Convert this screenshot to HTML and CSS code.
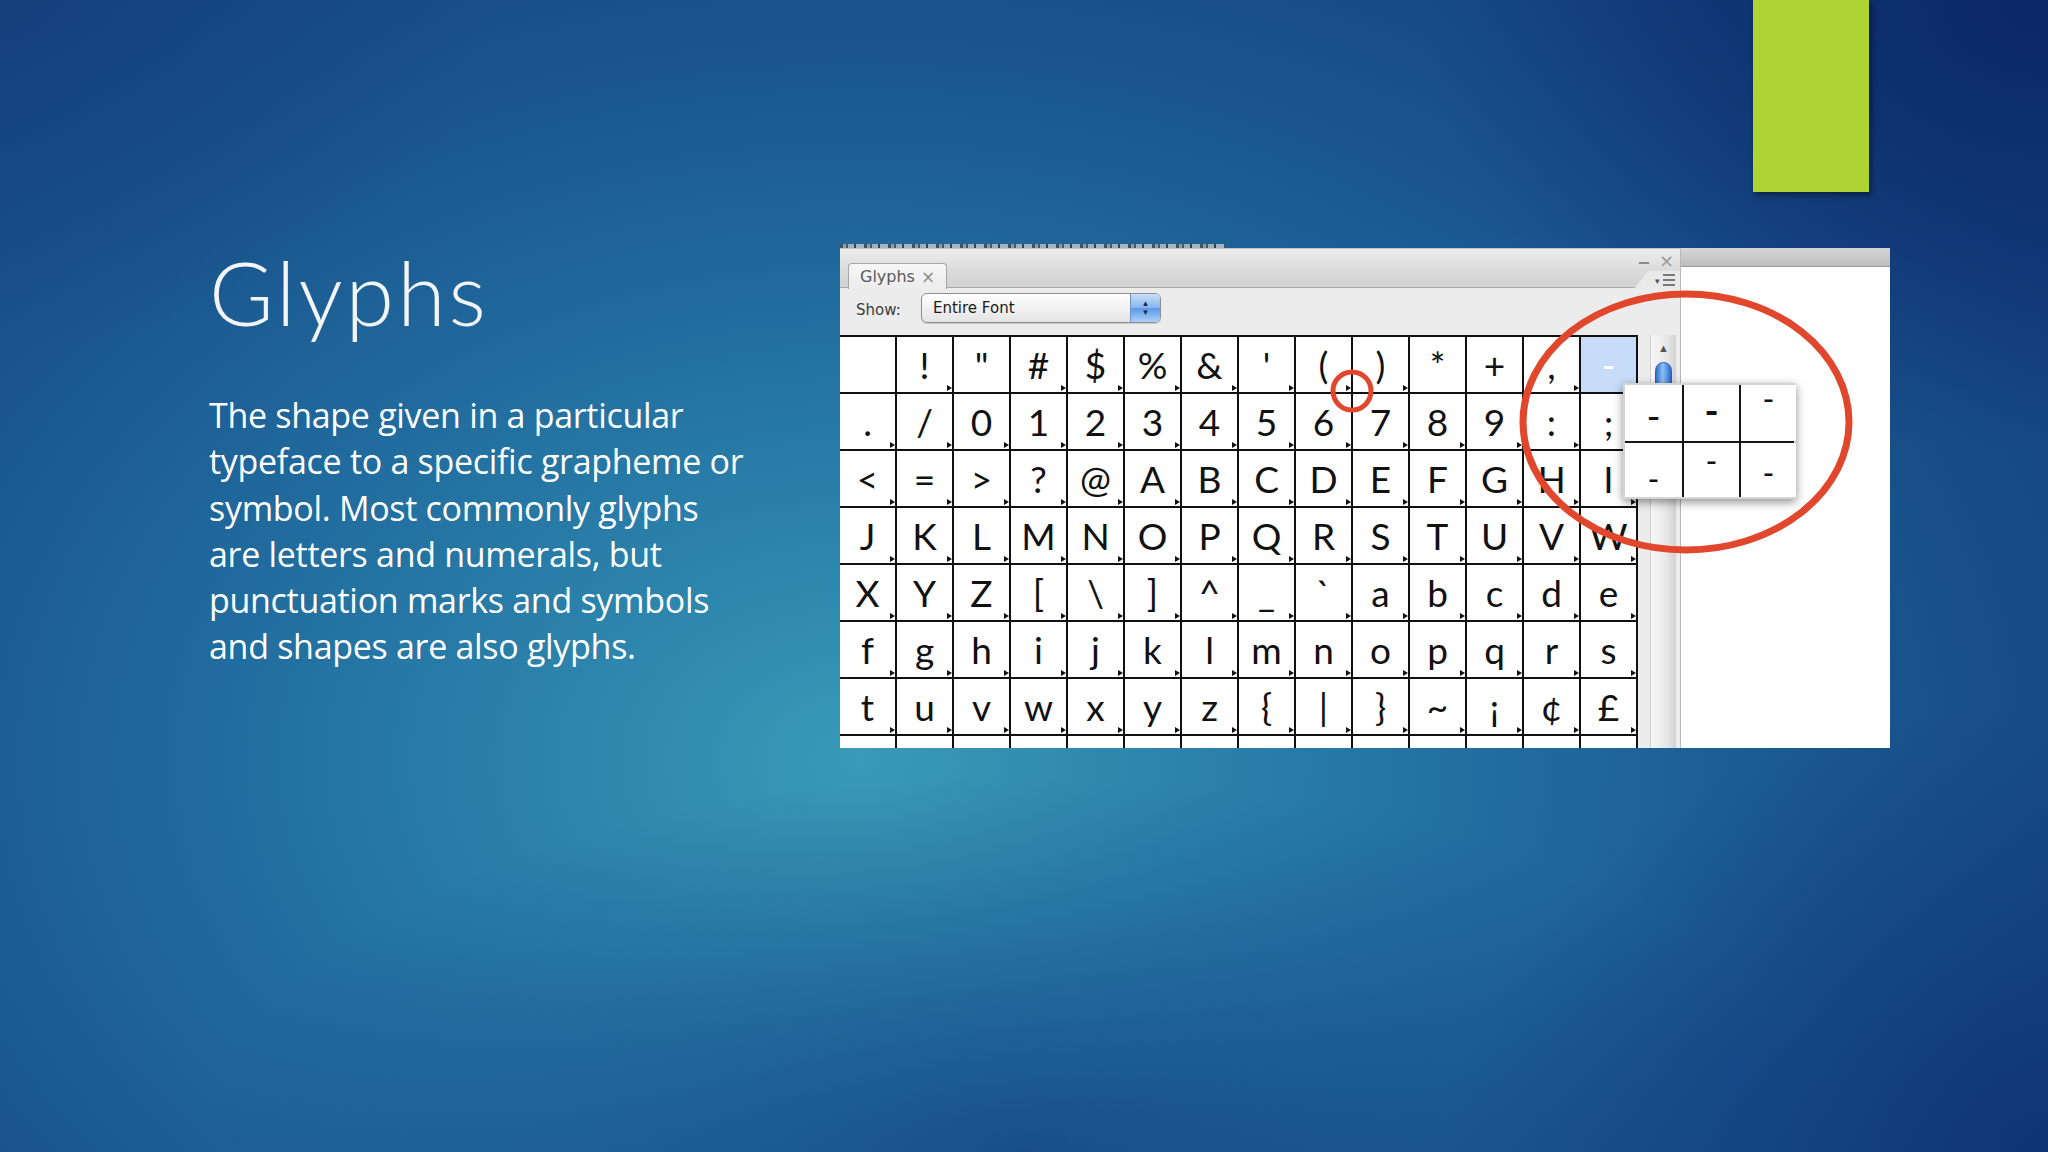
FILE: index.html
```html
<!DOCTYPE html>
<html lang="en">
<head>
<meta charset="utf-8">
<title>Glyphs</title>
<link rel="stylesheet" href="styles.css">
</head>
<body>
<div class="slide">
  <div class="accent"></div>
  <div class="content">
    <div class="text-col">
      <h1 class="title">Glyphs</h1>
      <p class="body-text">The shape given in a particular<br>typeface to a specific grapheme or<br>symbol. Most commonly glyphs<br>are letters and numerals, but<br>punctuation marks and symbols<br>and shapes are also glyphs.</p>
    </div>
    <div class="shot">
      <div class="menu-strip"></div>
      <div class="shot-main">
        <div class="panel">
          <div class="panel-head">
            <div class="tab"><span class="tab-label">Glyphs</span><span class="tab-x">×</span></div>
            <div class="win-ctrls"><span class="win-min"></span><span class="win-close">×</span></div>
            <div class="menu-notch"><span class="menu-tri">▾</span><span class="menu-lines"><i></i><i></i><i></i></span></div>
          </div>
          <div class="show-row">
            <span class="show-label">Show:</span>
            <div class="select">
              <span class="select-text">Entire Font</span>
              <span class="stepper"><span class="step-up">▲</span><span class="step-down">▼</span></span>
            </div>
          </div>
          <div class="grid-area">
            <div class="glyph-grid">
              <div class="c"></div><div class="c m">!</div><div class="c">&quot;</div><div class="c m">#</div><div class="c m">$</div><div class="c m">%</div><div class="c m">&amp;</div><div class="c m">'</div><div class="c m">(</div><div class="c m">)</div><div class="c">*</div><div class="c">+</div><div class="c m">,</div><div class="c sel">-</div>
              <div class="c m">.</div><div class="c m">/</div><div class="c m">0</div><div class="c m">1</div><div class="c m">2</div><div class="c m">3</div><div class="c m">4</div><div class="c m">5</div><div class="c m">6</div><div class="c m">7</div><div class="c m">8</div><div class="c m">9</div><div class="c m">:</div><div class="c m">;</div>
              <div class="c m">&lt;</div><div class="c m">=</div><div class="c m">&gt;</div><div class="c m">?</div><div class="c m">@</div><div class="c m">A</div><div class="c m">B</div><div class="c m">C</div><div class="c m">D</div><div class="c m">E</div><div class="c m">F</div><div class="c m">G</div><div class="c m">H</div><div class="c m">I</div>
              <div class="c m">J</div><div class="c m">K</div><div class="c m">L</div><div class="c m">M</div><div class="c m">N</div><div class="c m">O</div><div class="c m">P</div><div class="c m">Q</div><div class="c m">R</div><div class="c m">S</div><div class="c m">T</div><div class="c m">U</div><div class="c m">V</div><div class="c m">W</div>
              <div class="c m">X</div><div class="c m">Y</div><div class="c m">Z</div><div class="c m">[</div><div class="c m">\</div><div class="c m">]</div><div class="c m">^</div><div class="c m">_</div><div class="c m">`</div><div class="c m">a</div><div class="c m">b</div><div class="c m">c</div><div class="c m">d</div><div class="c m">e</div>
              <div class="c m">f</div><div class="c m">g</div><div class="c m">h</div><div class="c m">i</div><div class="c m">j</div><div class="c m">k</div><div class="c m">l</div><div class="c m">m</div><div class="c m">n</div><div class="c m">o</div><div class="c m">p</div><div class="c m">q</div><div class="c m">r</div><div class="c m">s</div>
              <div class="c m">t</div><div class="c m">u</div><div class="c m">v</div><div class="c m">w</div><div class="c m">x</div><div class="c m">y</div><div class="c m">z</div><div class="c m">{</div><div class="c m">|</div><div class="c m">}</div><div class="c m">~</div><div class="c m">¡</div><div class="c m">¢</div><div class="c m">£</div>
              <div class="c"></div><div class="c"></div><div class="c"></div><div class="c"></div><div class="c"></div><div class="c"></div><div class="c"></div><div class="c"></div><div class="c"></div><div class="c"></div><div class="c"></div><div class="c"></div><div class="c"></div><div class="c"></div>
            </div>
            <div class="scrollbar"><span class="scroll-up">▲</span><span class="thumb"></span></div>
          </div>
        </div>
        <div class="doc"><div class="doc-bar"></div></div>
      </div>
      <div class="popup">
        <div class="pc"><span class="dash d1">-</span></div>
        <div class="pc"><span class="dash d2">-</span></div>
        <div class="pc"><span class="dash d3">-</span></div>
        <div class="pc"><span class="dash d4">-</span></div>
        <div class="pc"><span class="dash d5">-</span></div>
        <div class="pc"><span class="dash d6">-</span></div>
      </div>
      <svg class="callouts" width="1050" height="504" viewBox="0 0 1050 504">
        <ellipse cx="846" cy="178" rx="163" ry="128" fill="none" stroke="#e1472c" stroke-width="7"/>
        <circle cx="512" cy="147" r="19" fill="none" stroke="#e1472c" stroke-width="5"/>
      </svg>
    </div>
  </div>
</div>
</body>
</html>
```

FILE: styles.css
```css
* { box-sizing: border-box; }
html, body { margin: 0; padding: 0; }
body { width: 2048px; height: 1152px; overflow: hidden; }

.slide {
  position: relative;
  width: 2048px;
  height: 1152px;
  overflow: hidden;
  background:
    radial-gradient(ellipse 900px 650px at 100% 0%, rgba(8, 32, 96, 0.8) 0%, rgba(8, 32, 96, 0) 70%),
    radial-gradient(ellipse 700px 500px at 0% 0%, rgba(20, 60, 120, 0.5) 0%, rgba(20, 60, 120, 0) 70%),
    radial-gradient(ellipse 1100px 500px at 50% 100%, rgba(14, 50, 120, 0.55) 0%, rgba(14, 50, 120, 0) 75%),
    radial-gradient(ellipse 800px 600px at 100% 100%, rgba(10, 40, 110, 0.6) 0%, rgba(10, 40, 110, 0) 75%),
    radial-gradient(ellipse 1400px 1000px at 42% 66%, #3a9ab7 0%, #2c84ac 22%, #216c9e 46%, #1a568f 70%, #14427e 100%);
}

.accent {
  position: absolute;
  left: 1753px;
  top: 0;
  width: 116px;
  height: 192px;
  background: #aed434;
  box-shadow: 2px 3px 6px rgba(0, 0, 0, 0.45);
}

.content {
  display: flex;
  align-items: flex-start;
  padding: 244px 0 0 209px;
}

.text-col {
  width: 631px;
  padding-top: 4px;
  color: #ffffff;
}

.title {
  margin: 0;
  font-family: "Lato", "DejaVu Sans", sans-serif;
  font-weight: 300;
  font-size: 88px;
  line-height: 88px;
  height: 88px;
  color: #f2f4f6;
  letter-spacing: 3px;
}

.body-text {
  margin: 56px 0 0 0;
  font-family: "Open Sans", "Liberation Sans", sans-serif;
  font-size: 34px;
  line-height: 46.3px;
  color: #ffffff;
  letter-spacing: -0.3px;
}

/* ---------- screenshot ---------- */
.shot {
  position: relative;
  width: 1050px;
  height: 504px;
}

.menu-strip {
  width: 385px;
  height: 4px;
  background:
    repeating-linear-gradient(90deg, #4a4a4a 0 3px, #b0b0b0 3px 6px, #555 6px 8px, #c8c8c8 8px 14px, #3a3a3a 14px 16px, #d0d0d0 16px 24px);
  opacity: 0.75;
}

.shot-main {
  display: flex;
  height: 500px;
}

.panel {
  width: 840px;
  height: 500px;
  background: #ececec;
  display: flex;
  flex-direction: column;
  overflow: hidden;
}

.panel-head {
  position: relative;
  flex-shrink: 0;
  height: 40px;
  background: linear-gradient(#ececec, #dadada 60%, #d2d2d2);
  border-bottom: 1px solid #a9a9a9;
  border-top: 1px solid #c4c4c4;
}

.tab {
  position: absolute;
  left: 8px;
  top: 14px;
  width: 99px;
  height: 26px;
  display: flex;
  align-items: center;
  gap: 6px;
  padding-left: 11px;
  background: linear-gradient(#f7f7f7, #ececec);
  border: 1px solid #a5a5a5;
  border-bottom: none;
  border-radius: 4px 4px 0 0;
  font-family: "DejaVu Sans", sans-serif;
  font-size: 16px;
  color: #5a5a5a;
}

.tab-x { color: #8c8c8c; font-size: 17px; }

.win-ctrls {
  position: absolute;
  right: 6px;
  top: 2px;
  display: flex;
  align-items: center;
  gap: 10px;
  height: 20px;
}

.win-min {
  width: 10px;
  height: 2px;
  background: #8a8a8a;
  margin-top: 4px;
}

.win-close {
  font-family: "DejaVu Sans", sans-serif;
  font-size: 18px;
  color: #9a9a9a;
  line-height: 18px;
}

.menu-notch {
  position: absolute;
  right: 0;
  top: 22px;
  width: 46px;
  height: 18px;
  background: #e9e9e9;
  clip-path: polygon(14px 0, 100% 0, 100% 100%, 0 100%);
  display: flex;
  align-items: center;
  justify-content: flex-end;
  gap: 3px;
  padding-right: 5px;
}

.menu-tri {
  font-size: 9px;
  color: #555;
  line-height: 9px;
  margin-top: 2px;
}

.menu-lines {
  display: flex;
  flex-direction: column;
  gap: 3px;
}

.menu-lines i {
  display: block;
  width: 12px;
  height: 2px;
  background: #7a7a7a;
}

.show-row {
  flex-shrink: 0;
  height: 47px;
  display: flex;
  align-items: flex-start;
  padding: 5px 0 0 16px;
}

.show-label {
  font-family: "DejaVu Sans", sans-serif;
  font-size: 15px;
  color: #3a3a3a;
  width: 65px;
  margin-top: 8px;
}

.select {
  width: 240px;
  height: 30px;
  display: flex;
  align-items: center;
  border: 1px solid #8e8e8e;
  border-radius: 6px;
  background: linear-gradient(#ffffff, #f1f1f1 50%, #e4e4e4);
  box-shadow: 0 1px 1px rgba(0, 0, 0, 0.15);
  overflow: hidden;
}

.select-text {
  flex: 1;
  padding-left: 11px;
  font-family: "DejaVu Sans", sans-serif;
  font-size: 15px;
  color: #1a1a1a;
}

.stepper {
  width: 30px;
  height: 100%;
  display: flex;
  flex-direction: column;
  align-items: center;
  justify-content: center;
  background: linear-gradient(#c9e0fa, #84b5ef 50%, #5d9ae6 52%, #a9d0fa);
  border-left: 1px solid #6f93c3;
  color: #1d2b44;
  font-size: 8px;
  line-height: 9px;
}

.grid-area {
  display: flex;
  align-items: flex-start;
  flex: 1 1 auto;
  min-height: 0;
  overflow: hidden;
}

.glyph-grid {
  width: 798px;
  flex-shrink: 0;
  display: grid;
  grid-template-columns: repeat(14, 55px);
  grid-auto-rows: 55px;
  gap: 2px;
  padding: 2px 2px 0 0;
  background: #111111;
}

.c {
  position: relative;
  background: #ffffff;
  text-align: center;
  font-family: "Lato", "DejaVu Sans", sans-serif;
  font-size: 37px;
  line-height: 55px;
  color: #111111;
}

.c.m::after {
  content: "";
  position: absolute;
  right: 0;
  bottom: 1px;
  width: 0;
  height: 0;
  border-left: 5px solid #111111;
  border-top: 3px solid transparent;
  border-bottom: 3px solid transparent;
}

.c.sel {
  background: #c6dcf8;
  color: #ffffff;
}

.scrollbar {
  position: relative;
  flex-shrink: 0;
  margin: -1px 0 0 12px;
  width: 26px;
  height: 420px;
  background: linear-gradient(90deg, #f7f7f7, #e8e8e8 60%, #d2d2d2);
  border-left: 1px solid #cfcfcf;
  display: flex;
  flex-direction: column;
  align-items: center;
}

.scroll-up {
  margin-top: 8px;
  font-size: 11px;
  line-height: 12px;
  color: #555;
}

.thumb {
  margin-top: 8px;
  width: 17px;
  height: 34px;
  border-radius: 9px 9px 0 0;
  border: 1px solid #2d5fa8;
  background: linear-gradient(90deg, #2f6fcc, #8fc0f4 45%, #5b9ae6 70%, #2d68c4);
}

.doc {
  flex: 1;
  height: 500px;
  background: #ffffff;
  border-left: 1px solid #b8b8b8;
}

.doc-bar {
  height: 19px;
  background: linear-gradient(#d6d6d6, #bdbdbd);
  border-bottom: 1px solid #9a9a9a;
}

/* popup of alternates */
.popup {
  position: absolute;
  left: 783px;
  top: 139px;
  width: 173px;
  height: 116px;
  display: grid;
  grid-template-columns: 57px 55px 55px;
  grid-template-rows: 56px 54px;
  gap: 2px;
  background: #151515;
  border: 2px solid #d4d4d4;
  box-shadow: 0 3px 9px rgba(0, 0, 0, 0.45);
}

.pc {
  background: #ffffff;
  display: flex;
  flex-direction: column;
  align-items: center;
}

.dash {
  display: block;
  font-family: "Lato", "DejaVu Sans", sans-serif;
  font-size: 38px;
  line-height: 38px;
  height: 38px;
  color: #111;
}

.d1 { margin-top: 11px; }
.d2 { margin-top: 6px; font-weight: 700; }
.d3 { margin-top: -5px; font-size: 32px; }
.d4 { margin-top: 17px; font-size: 32px; }
.d5 { margin-top: -1px; font-size: 32px; }
.d6 { margin-top: 11px; font-size: 32px; }

.callouts {
  position: absolute;
  left: 0;
  top: 0;
  overflow: visible;
  pointer-events: none;
}
```
